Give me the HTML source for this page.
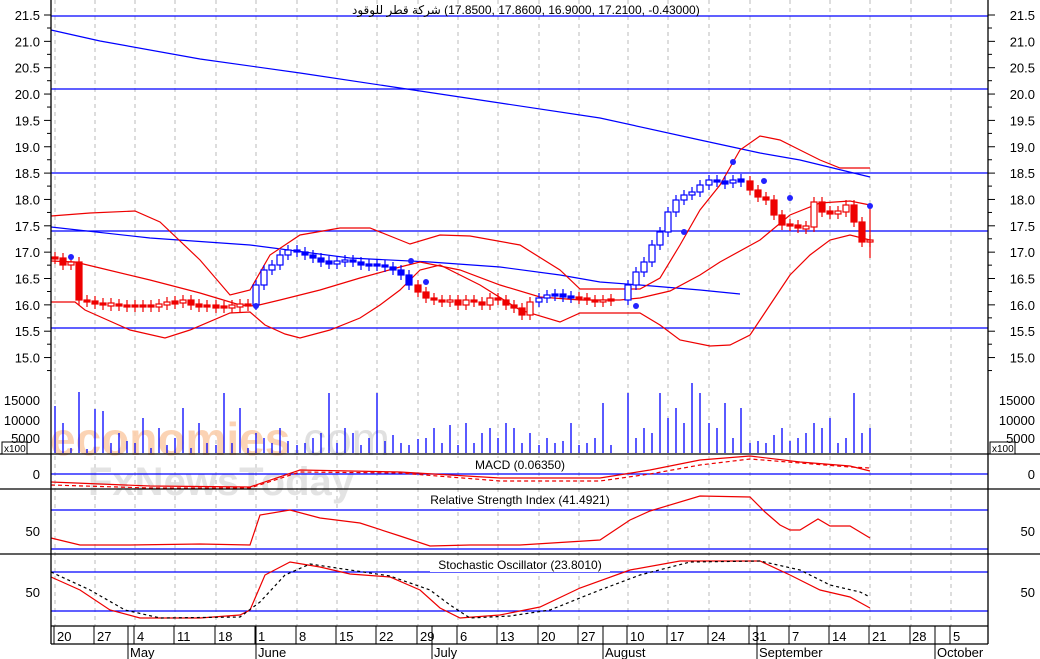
<!DOCTYPE html>
<html><head><meta charset="utf-8"><style>
html,body{margin:0;padding:0;background:#fff;}
svg{display:block;font-family:"Liberation Sans","Noto Sans CJK SC",sans-serif;}
#title{position:absolute;left:352px;top:3px;font:12px "Liberation Sans","DejaVu Sans",sans-serif;direction:ltr;white-space:nowrap;color:#000;}
</style></head><body>
<div id="title"><bdi>شركة قطر للوقود</bdi> (17.8500, 17.8600, 16.9000, 17.2100, -0.43000)</div>
<svg id="c" width="1040" height="659" viewBox="0 0 1040 659" xmlns="http://www.w3.org/2000/svg">
<rect width="1040" height="659" fill="#fff"/>
<g id="grid" stroke="#bbb" stroke-dasharray="4,4" stroke-width="1"></g>
<text x="50" y="455" font-size="46" fill="#fbcfac" font-weight="bold" opacity="0.9">economies<tspan fill="#ddd" font-weight="normal">.com</tspan></text>
<text x="88" y="495" font-size="40" fill="#ddd" font-weight="bold" opacity="0.8">FxNewsToday</text>
<g stroke="#00f" stroke-width="1.3">
<line x1="51" y1="16" x2="988" y2="16"/><line x1="51" y1="89" x2="988" y2="89"/>
<line x1="51" y1="173" x2="988" y2="173"/><line x1="51" y1="231" x2="988" y2="231"/>
<line x1="51" y1="328" x2="988" y2="328"/>
<line x1="51" y1="474" x2="988" y2="474"/>
<line x1="51" y1="510" x2="988" y2="510"/><line x1="51" y1="549" x2="988" y2="549"/>
<line x1="51" y1="572" x2="988" y2="572"/><line x1="51" y1="611" x2="988" y2="611"/>
</g>
<g fill="none" stroke-width="1.2">
<polyline stroke="#00f" points="51,30 100,41 200,59 300,73 400,88 500,103 600,118 700,140 760,153 800,160 870,177"/>
<polyline stroke="#00f" points="51,227 150,238 250,245 350,258 430,262 500,267 560,275 600,282 640,285 700,290 740,294"/>
<polyline stroke="#e00" points="51,216 90,213 135,211 160,222 200,260 230,295 250,290 270,255 300,235 340,228 370,228 400,240 410,244 440,235 470,236 520,245 560,270 580,289 640,289 660,278 680,245 700,210 720,185 740,150 760,136 780,140 800,150 820,160 840,168 870,168"/>
<polyline stroke="#e00" points="51,261 75,262 100,268 150,280 200,293 240,305 255,306 280,300 320,290 360,278 400,267 420,262 460,270 500,285 540,297 580,300 620,300 640,298 670,291 700,275 720,262 760,240 790,215 820,203 850,201 870,205"/>
<polyline stroke="#e00" points="51,302 75,302 85,310 130,330 165,338 190,330 230,313 250,312 265,325 285,334 300,338 330,330 360,318 380,305 400,290 420,270 440,265 480,285 520,310 560,322 580,313 640,313 660,325 680,340 710,346 730,345 750,335 770,305 790,275 810,255 830,240 850,235 870,240"/>
<polyline stroke="#e00" points="51,482 150,486 250,487 300,470 400,472 500,478 600,478 650,470 700,460 750,456 800,462 850,466 870,471"/>
<polyline stroke="#e00" stroke-dasharray="4,3" points="51,485 150,488 250,488 300,472 400,473 500,481 600,481 650,474 700,465 750,459 800,463 850,467 870,468"/>
<polyline stroke="#e00" points="51,538 80,545 130,545 200,544 250,545 260,515 290,510 320,518 360,523 400,536 430,546 470,545 520,545 600,540 630,520 650,511 700,496 750,497 765,512 780,525 790,530 800,530 818,519 830,526 850,526 870,538"/>
<polyline stroke="#e00" points="51,577 80,590 110,610 140,618 200,618 240,615 250,610 265,575 290,562 320,567 350,574 390,577 420,590 440,608 460,618 500,615 540,607 580,588 630,570 680,561 760,561 790,575 820,590 850,597 870,608"/>
<polyline stroke="#000" stroke-dasharray="3,3" points="51,572 90,590 125,610 160,618 240,617 260,602 285,575 310,564 350,570 390,576 430,590 450,605 470,618 510,616 550,610 600,590 640,575 690,562 760,561 800,570 830,585 860,592 870,597"/>
</g>
<g id="cand"></g>
<g id="vol" stroke="#00f" stroke-width="1.3"></g>
<g fill="#22f">
<circle cx="71" cy="257" r="3"/><circle cx="256" cy="306" r="3"/><circle cx="411" cy="261" r="3"/><circle cx="426" cy="282" r="3"/><circle cx="636" cy="306" r="3"/><circle cx="684" cy="232" r="3"/><circle cx="733" cy="162" r="3"/><circle cx="764" cy="181" r="3"/><circle cx="790" cy="198" r="3"/><circle cx="870" cy="206" r="3"/>
</g>
<g stroke="#000" stroke-width="1.3" fill="none">
<line x1="51" y1="0" x2="51" y2="644"/><line x1="988" y1="0" x2="988" y2="644"/>
<line x1="0" y1="454" x2="1040" y2="454"/><line x1="0" y1="489" x2="1040" y2="489"/>
<line x1="0" y1="554" x2="1040" y2="554"/>
<line x1="51" y1="626" x2="988" y2="626"/><line x1="51" y1="644" x2="988" y2="644"/>
<rect x="2" y="442" width="25" height="12" fill="#fff" stroke-width="1"/>
<rect x="990" y="442" width="25" height="12" fill="#fff" stroke-width="1"/>
</g>
<text x="4" y="452" font-size="10">x100</text><text x="992" y="452" font-size="10">x100</text>
<g id="ticks" stroke="#000" stroke-width="1"></g>
<g font-size="13" fill="#000" id="labels"></g>
<g font-size="12" text-anchor="middle" fill="#000">
<rect x="435" y="458" width="170" height="13" fill="#fff"/><text x="520" y="469">MACD (0.06350)</text>
<rect x="425" y="493" width="190" height="14" fill="#fff"/><text x="520" y="504">Relative Strength Index (41.4921)</text>
<rect x="430" y="558" width="180" height="14" fill="#fff"/><text x="520" y="569">Stochastic Oscillator (23.8010)</text>
</g>
<g font-size="13" fill="#000">
<text x="57" y="641">20</text><text x="97" y="641">27</text><text x="137" y="641">4</text><text x="177" y="641">11</text><text x="218" y="641">18</text><text x="258" y="641">1</text><text x="299" y="641">8</text><text x="339" y="641">15</text><text x="379" y="641">22</text><text x="420" y="641">29</text><text x="460" y="641">6</text><text x="500" y="641">13</text><text x="541" y="641">20</text><text x="581" y="641">27</text><text x="630" y="641">10</text><text x="670" y="641">17</text><text x="711" y="641">24</text><text x="752" y="641">31</text><text x="792" y="641">7</text><text x="832" y="641">14</text><text x="872" y="641">21</text><text x="912" y="641">28</text><text x="953" y="641">5</text>
<text x="130" y="657">May</text><text x="258" y="657">June</text><text x="434" y="657">July</text><text x="605" y="657">August</text><text x="759" y="657">September</text><text x="937" y="657">October</text>
</g>
<g stroke="#000" stroke-width="1">
<line x1="128" y1="626" x2="128" y2="659"/><line x1="256" y1="626" x2="256" y2="659"/><line x1="432" y1="626" x2="432" y2="659"/><line x1="603" y1="626" x2="603" y2="659"/><line x1="757" y1="626" x2="757" y2="659"/><line x1="935" y1="626" x2="935" y2="659"/>
</g>
</svg>
<script>
var NS="http://www.w3.org/2000/svg";
function el(p,n,a){var e=document.createElementNS(NS,n);for(var k in a)e.setAttribute(k,a[k]);document.getElementById(p).appendChild(e);return e;}
var gx=[55,95,135,175,216,256,297,337,377,418,458,498,539,579,628,668,709,750,790,830,870,911,951];
gx.forEach(function(x){el("grid","line",{x1:x,y1:0,x2:x,y2:626});});
gx.forEach(function(x){el("ticks","line",{x1:x-1,y1:626,x2:x-1,y2:644});});
var cl=[[258,265,262,300,302],[303,305,304,306,306],[306,306,306,305,302],[303,300,305,306,306],[307,307,306,305,305],
[285,270,265,255,250],[252,255,258,262,263],[262,260,262,265,265],[265,267,270,275,285],[292,298,300,302,300],
[305,300,302,305,298],[300,305,308,315,302],[298,295,295,296,298],[298,300,302,300,300],[285,272,262,245,232],
[212,200,195,192,185],[180,182,183,180,181],[190,197,200,215,225],[225,228,227,202,212],[213,212,205,222,242],[240]];
var vol=[47,30,5,61,4,44,42,10,20,12,10,35,5,25,8,15,45,5,30,10,8,60,10,45,5,20,15,10,25,12,8,10,15,20,60,10,25,20,8,15,60,12,18,10,8,14,15,25,10,28,8,30,10,20,25,15,30,25,10,20,8,15,10,12,30,8,10,15,50,8,60,15,25,20,60,35,45,30,70,60,30,25,50,15,45,10,12,10,18,25,12,15,20,30,25,35,10,15,60,20,25];
var prev=258,vi=0;
cl.forEach(function(w,wi){w.forEach(function(c,d){var x=gx[wi]+d*8;var o=prev;
 var blue=(wi>=5&&wi<=8)||(wi>=14&&wi<=16)||(wi==12);var col=blue?"#00f":"#e00";
 var top=Math.min(o,c),bot=Math.max(o,c);if(bot-top<2){top-=1;bot+=1;}
 el("cand","line",{x1:x,y1:top-5,x2:x,y2:bot+5,stroke:col,"stroke-width":1.2});
 var up=c<o;el("cand","rect",{x:x-3,y:top,width:6,height:bot-top,fill:up?"#fff":col,stroke:col,"stroke-width":1.2});
 prev=c;var h=vol[vi++]||10;el("vol","line",{x1:x,y1:453,x2:x,y2:453-h});});});
el("cand","line",{x1:870,y1:205,x2:870,y2:258,stroke:"#e00","stroke-width":1.2});
var pl=[21.5,21.0,20.5,20.0,19.5,19.0,18.5,18.0,17.5,17.0,16.5,16.0,15.5,15.0];
pl.forEach(function(p){var y=15+(21.5-p)*52.7;
 var t=el("labels","text",{x:40,y:y+5,"text-anchor":"end"});t.textContent=p.toFixed(1);
 var t2=el("labels","text",{x:1035,y:y+5,"text-anchor":"end"});t2.textContent=p.toFixed(1);
 el("ticks","line",{x1:44,y1:y,x2:51,y2:y});el("ticks","line",{x1:988,y1:y,x2:995,y2:y});
 el("ticks","line",{x1:47,y1:y+13,x2:51,y2:y+13});el("ticks","line",{x1:988,y1:y+13,x2:992,y2:y+13});});
[[15000,400],[10000,420],[5000,438]].forEach(function(a){var t=el("labels","text",{x:40,y:a[1]+5,"text-anchor":"end"});t.textContent=a[0];var t2=el("labels","text",{x:1035,y:a[1]+5,"text-anchor":"end"});t2.textContent=a[0];});
[[0,474],[50,531],[50,592]].forEach(function(a){var t=el("labels","text",{x:40,y:a[1]+5,"text-anchor":"end"});t.textContent=a[0];var t2=el("labels","text",{x:1035,y:a[1]+5,"text-anchor":"end"});t2.textContent=a[0];});
</script>
</body></html>
